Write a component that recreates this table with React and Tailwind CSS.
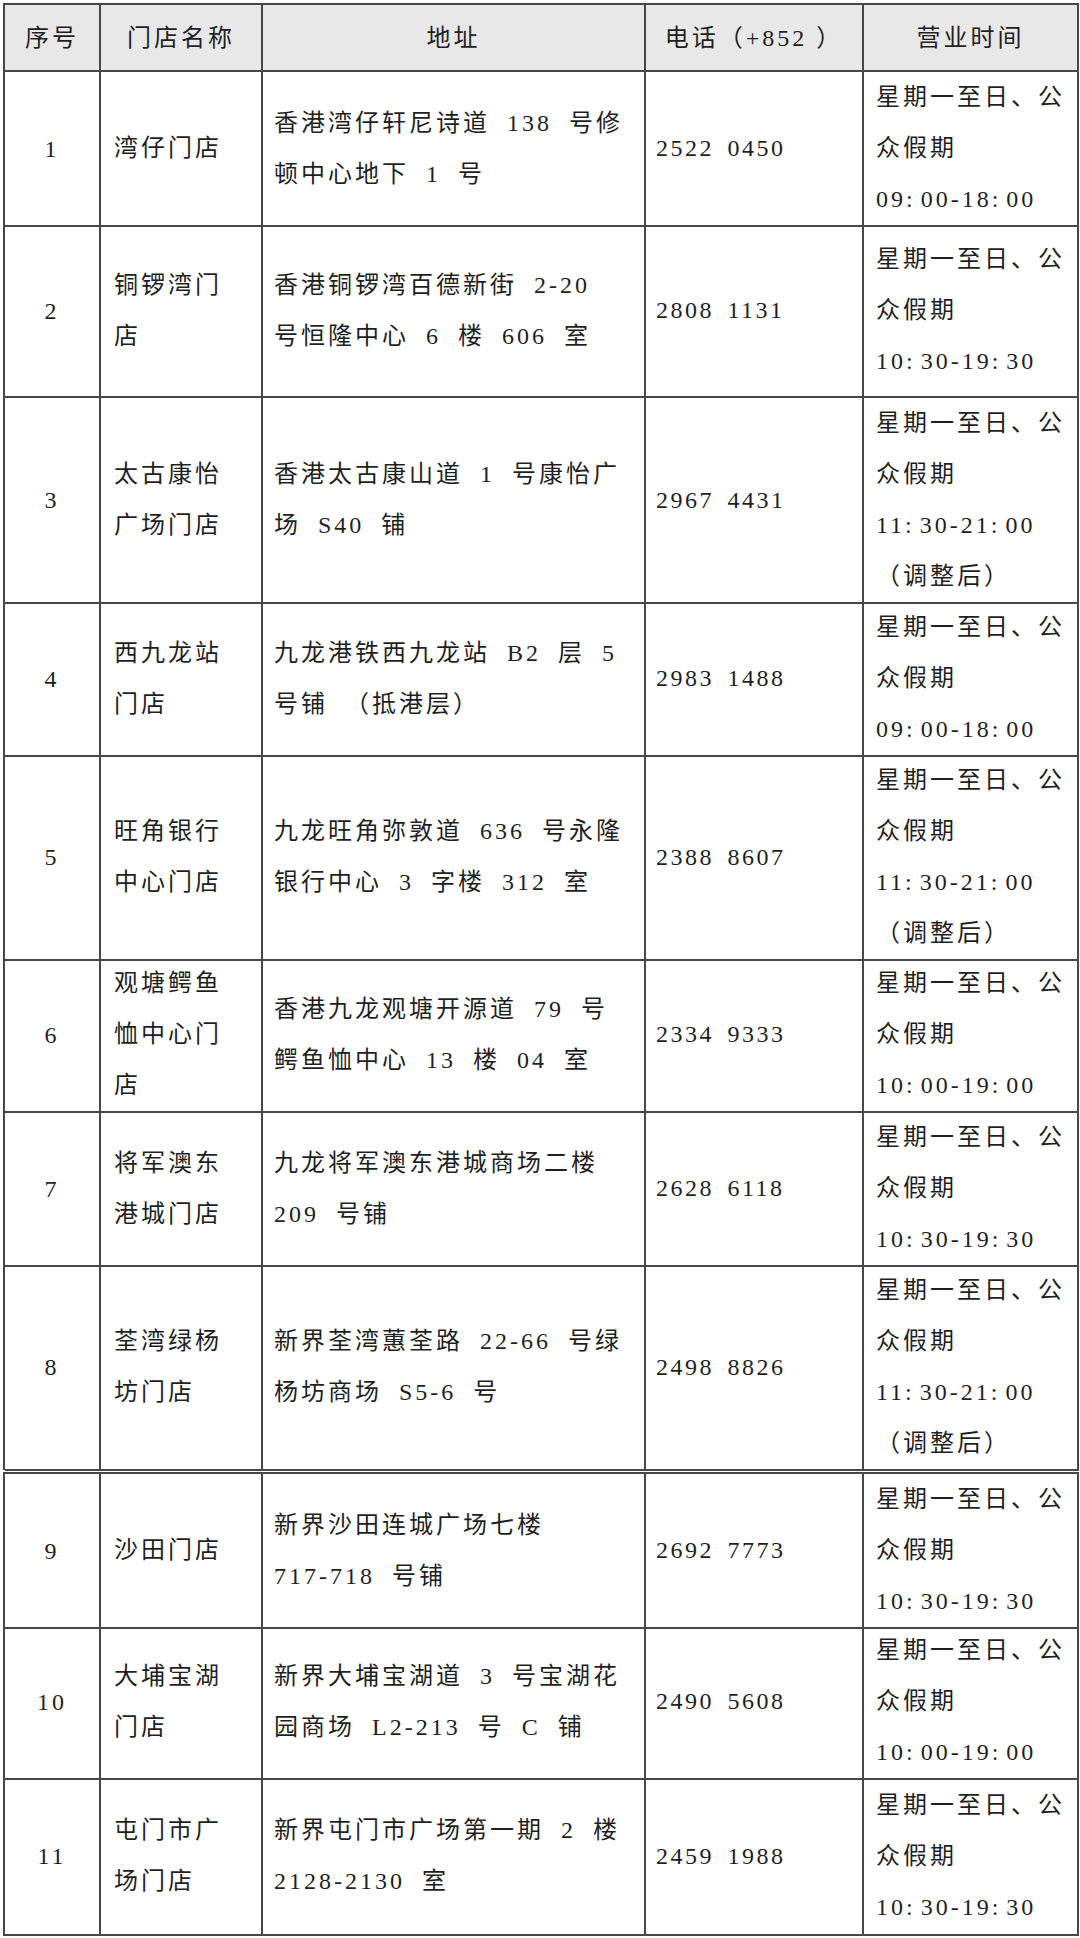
const stores1 = [
  {
    no: "1",
    h: "h-[153px]",
    name: ["湾仔门店"],
    addr: ["香港湾仔轩尼诗道 138 号修", "顿中心地下 1 号"],
    tel: "2522 0450",
    hours: ["星期一至日、公", "众假期", "09: 00-18: 00"],
  },
  {
    no: "2",
    h: "h-[173px]",
    name: ["铜锣湾门", "店"],
    addr: ["香港铜锣湾百德新街 2-20", "号恒隆中心 6 楼 606 室"],
    tel: "2808 1131",
    hours: ["星期一至日、公", "众假期", "10: 30-19: 30"],
  },
  {
    no: "3",
    h: "h-[204px]",
    name: ["太古康怡", "广场门店"],
    addr: ["香港太古康山道 1 号康怡广", "场 S40 铺"],
    tel: "2967 4431",
    hours: ["星期一至日、公", "众假期", "11: 30-21: 00", "（调整后）"],
  },
  {
    no: "4",
    h: "h-[153px]",
    name: ["西九龙站", "门店"],
    addr: ["九龙港铁西九龙站 B2 层 5", "号铺 （抵港层）"],
    tel: "2983 1488",
    hours: ["星期一至日、公", "众假期", "09: 00-18: 00"],
  },
  {
    no: "5",
    h: "h-[203px]",
    name: ["旺角银行", "中心门店"],
    addr: ["九龙旺角弥敦道 636 号永隆", "银行中心 3 字楼 312 室"],
    tel: "2388 8607",
    hours: ["星期一至日、公", "众假期", "11: 30-21: 00", "（调整后）"],
  },
  {
    no: "6",
    h: "h-[154px]",
    name: ["观塘鳄鱼", "恤中心门", "店"],
    addr: ["香港九龙观塘开源道 79 号", "鳄鱼恤中心 13 楼 04 室"],
    tel: "2334 9333",
    hours: ["星期一至日、公", "众假期", "10: 00-19: 00"],
  },
  {
    no: "7",
    h: "h-[153px]",
    name: ["将军澳东", "港城门店"],
    addr: ["九龙将军澳东港城商场二楼", "209 号铺"],
    tel: "2628 6118",
    hours: ["星期一至日、公", "众假期", "10: 30-19: 30"],
  },
  {
    no: "8",
    h: "h-[205px]",
    name: ["荃湾绿杨", "坊门店"],
    addr: ["新界荃湾蕙荃路 22-66 号绿", "杨坊商场 S5-6 号"],
    tel: "2498 8826",
    hours: ["星期一至日、公", "众假期", "11: 30-21: 00", "（调整后）"],
  },
];

const stores2 = [
  {
    no: "9",
    h: "h-[151px]",
    name: ["沙田门店"],
    addr: ["新界沙田连城广场七楼", "717-718 号铺"],
    tel: "2692 7773",
    hours: ["星期一至日、公", "众假期", "10: 30-19: 30"],
  },
  {
    no: "10",
    h: "h-[153px]",
    name: ["大埔宝湖", "门店"],
    addr: ["新界大埔宝湖道 3 号宝湖花", "园商场 L2-213 号 C 铺"],
    tel: "2490 5608",
    hours: ["星期一至日、公", "众假期", "10: 00-19: 00"],
  },
  {
    no: "11",
    h: "h-[158px]",
    name: ["屯门市广", "场门店"],
    addr: ["新界屯门市广场第一期 2 楼", "2128-2130 室"],
    tel: "2459 1988",
    hours: ["星期一至日、公", "众假期", "10: 30-19: 30"],
  },
];

const grid = "grid grid-cols-[96px_162px_383px_218px_215px]";
const cell = "border-r-2 border-b-2 border-[#474747] flex flex-col justify-center";

function Lines({ lines, className = "" }) {
  return lines.map((l, i) => (
    <div key={i} className={`whitespace-pre leading-[51px] ${className}`}>
      {l}
    </div>
  ));
}

function StoreRow({ s }) {
  return (
    <div className={`${grid} ${s.h}`}>
      <div className={`${cell} items-center`}>{s.no}</div>
      <div className={`${cell} pl-[13px]`}>
        <Lines lines={s.name} />
      </div>
      <div className={`${cell} pl-[11px] [word-spacing:8px]`}>
        <Lines lines={s.addr} />
      </div>
      <div className={`${cell} pl-[10px] tracking-[2.5px] [word-spacing:5px]`}>
        <div className="whitespace-pre leading-[51px]">{s.tel}</div>
      </div>
      <div className={`${cell} pl-[12px] [word-spacing:-4px]`}>
        <Lines lines={s.hours} />
      </div>
    </div>
  );
}

export default function App() {
  const headers = ["序号", "门店名称", "地址", "电话（+852 ）", "营业时间"];
  return (
    <div className="w-[1080px] h-[1938px] bg-white pt-[3px] pl-[3px] text-[24px] tracking-[3px] text-[#1f1f1f] font-['Liberation_Serif','Noto_Sans_CJK_SC',serif]">
      <div className="w-[1076px] border-l-2 border-t-2 border-[#474747]">
        <div className={`${grid} h-[67px] bg-[#e8e8e8]`}>
          {headers.map((h) => (
            <div key={h} className={`${cell} items-center whitespace-pre`}>
              {h}
            </div>
          ))}
        </div>
        {stores1.map((s) => (
          <StoreRow key={s.no} s={s} />
        ))}
      </div>
      <div className="mt-[2px] w-[1076px] border-l-2 border-t-2 border-[#474747]">
        {stores2.map((s) => (
          <StoreRow key={s.no} s={s} />
        ))}
      </div>
    </div>
  );
}
